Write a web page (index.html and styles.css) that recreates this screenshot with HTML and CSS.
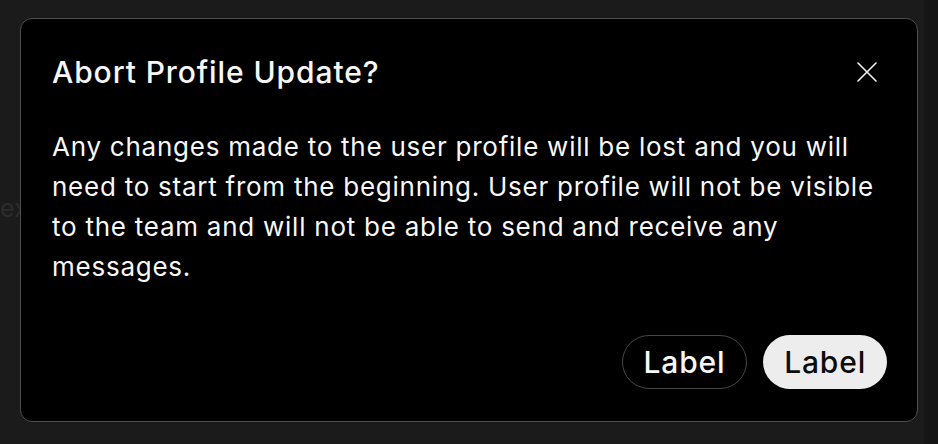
FILE: index.html
```html
<!doctype html>
<html lang="en">

<head>
	<meta charset="UTF-8" />
	<meta name="viewport" content="width=device-width, initial-scale=1.0" />
	<title>Abort Profile Update</title>
	<link rel="stylesheet" href="styles.css">
</head>

<body>
	<div class="page">
		<p class="page-text">ex</p>
	</div>

	<div class="overlay">
		<div class="dialog" role="dialog" aria-labelledby="dialogTitle">
			<div class="dialog-header">
				<h2 id="dialogTitle">Abort Profile Update?</h2>
				<button type="button" class="close-btn" aria-label="Close">
					<svg width="20" height="20" viewBox="0 0 20 20">
						<path d="M1 1L19 19M19 1L1 19" stroke="#f2f2f2" stroke-width="1.6" stroke-linecap="round" fill="none" />
					</svg>
				</button>
			</div>

			<p class="dialog-body">Any changes made to the user profile will be lost and you will need to start from the beginning. User profile will not be visible to the team and will not be able to send and receive any messages.</p>

			<div class="dialog-actions">
				<button type="button" class="btn btn-secondary">Label</button>
				<button type="button" class="btn btn-primary">Label</button>
			</div>
		</div>
	</div>
</body>

</html>
```

FILE: styles.css
```css
html,
body {
	margin: 0;
	height: 100%;
}

body {
	font-family: Inter, "Noto Sans", Arial, sans-serif;
	background-color: #151515;
	color: #f7f7f7;
}

.page {
	height: 100%;
	margin-right: 14px;
	background-color: #1b1b1b;
	overflow: hidden;
}

.page-text {
	margin: 0;
	padding-top: 193px;
	font-size: 25px;
	color: #2c2c2c;
}

.overlay {
	position: fixed;
	top: 18px;
	left: 20px;
}

.dialog {
	width: 898px;
	box-sizing: border-box;
	padding: 33px 30px 32px 31px;
	background-color: #000;
	border: 1px solid #4d4d4d;
	border-radius: 12px;
}

.dialog-header {
	display: flex;
	align-items: center;
	justify-content: space-between;
}

.dialog-header h2 {
	margin: 0;
	font-size: 30px;
	font-weight: 500;
	letter-spacing: 0.9px;
	line-height: 40px;
	color: #f7f7f7;
}

.close-btn {
	width: 36px;
	height: 36px;
	margin-right: 2px;
	padding: 0;
	background: none;
	border: none;
	display: flex;
	align-items: center;
	justify-content: center;
	cursor: pointer;
}

.dialog-body {
	margin: 35px 0 0;
	font-size: 26px;
	letter-spacing: 0.75px;
	line-height: 40px;
	color: #f7f7f7;
}

.dialog-actions {
	display: flex;
	justify-content: flex-end;
	gap: 16px;
	margin-top: 48px;
}

.btn {
	height: 54px;
	padding: 0 21px;
	border-radius: 27px;
	font-family: inherit;
	font-size: 30px;
	font-weight: 500;
	letter-spacing: 0.8px;
	cursor: pointer;
}

.btn-secondary {
	background: none;
	color: #f7f7f7;
	border: 1.5px solid #474747;
}

.btn-primary {
	background-color: #ededed;
	color: #0d0d0d;
	border: none;
}
```
